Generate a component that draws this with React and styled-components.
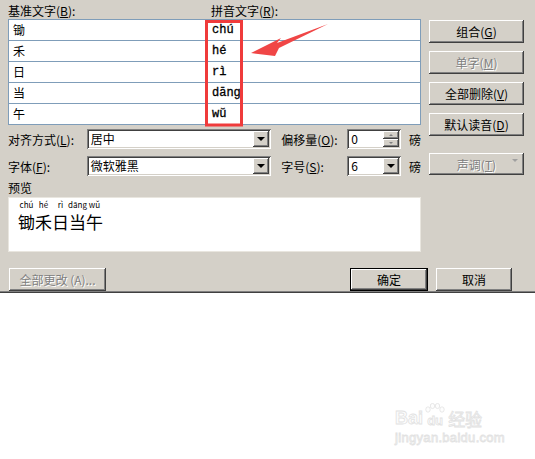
import React from "react";
import styled, { createGlobalStyle } from "styled-components";

// Windows classic 颜色
const FACE = "#d4d0c8";
const GRID = "#7f9db9";
const MARK = "#ef3b3b";

const GlobalStyle = createGlobalStyle`
  * { box-sizing: border-box; }
  html, body {
    margin: 0;
    padding: 0;
    background: #ffffff;
    font-family: "Noto Sans CJK SC", "Liberation Sans", sans-serif;
    font-size: 12px;
    color: #000;
  }
`;

const Page = styled.div`
  width: 535px;
  height: 459px;
  display: flex;
  flex-direction: column;
`;

// 对话框主体
const Dialog = styled.div`
  position: relative;
  width: 535px;
  height: 293px;
  background: ${FACE};
  padding: 3px 11px 0 8px;
  display: grid;
  grid-template-columns: 413px 95px;
  grid-template-rows: auto auto;
  column-gap: 8px;
  box-shadow: inset 0 -1px #404040, inset 0 -2px #808080;
`;

const LeftCol = styled.div`
  display: flex;
  flex-direction: column;
`;

const RightCol = styled.div`
  display: flex;
  flex-direction: column;
  gap: 8px;
  padding-top: 17px;
`;

const LabelRow = styled.div`
  display: flex;
  height: 16px;
  line-height: 16px;
`;

const Label = styled.span`
  display: inline-block;
  width: ${(p) => (p.$w ? `${p.$w}px` : "auto")};
  padding-left: ${(p) => p.$pl || 0}px;
  white-space: nowrap;
  font-size: 12px;
  color: ${(p) => (p.$disabled ? "#808080" : "#000")};
  text-shadow: ${(p) => (p.$disabled ? "1px 1px #fff" : "none")};
  u { text-decoration: underline; }
`;

// 基准/拼音 表格
const Table = styled.div`
  height: 106px;
  background: #fff;
  border: 1px solid ${GRID};
  display: flex;
  flex-direction: column;
`;

const Row = styled.div`
  display: grid;
  grid-template-columns: 198px 1fr;
  height: 21px;
  border-bottom: 1px solid ${GRID};
  &:last-child { border-bottom: none; height: 20px; }
`;

const BaseCell = styled.div`
  padding-left: 4px;
  font-size: 12px;
  line-height: 20px;
`;

const PinyinCell = styled.div`
  padding-left: 5px;
  font-family: "Liberation Mono", "DejaVu Sans Mono", monospace;
  font-weight: 400;
  font-size: 12px;
  line-height: 20px;
  -webkit-text-stroke: 0.3px #000;
`;

const OptRow = styled.div`
  display: flex;
  align-items: center;
  height: 20px;
  margin-top: ${(p) => p.$mt}px;
`;

const Field = styled.div`
  width: ${(p) => p.$w}px;
  height: 20px;
  background: #fff;
  padding: 2px;
  display: flex;
  align-items: center;
  box-shadow: inset 1px 1px #808080, inset -1px -1px #fff,
    inset 2px 2px #404040, inset -2px -2px ${FACE};
`;

const FieldText = styled.span`
  flex: 1;
  padding-left: 2px;
  font-size: 12px;
  line-height: 16px;
`;

const Raised = styled.div`
  width: 16px;
  height: ${(p) => p.$h || 16}px;
  background: ${FACE};
  display: flex;
  align-items: center;
  justify-content: center;
  box-shadow: inset -1px -1px #404040, inset 1px 1px #fff,
    inset -2px -2px #808080, inset 2px 2px ${FACE};
`;

const Tri = styled.span`
  width: 0;
  height: 0;
  border-left: ${(p) => p.$s}px solid transparent;
  border-right: ${(p) => p.$s}px solid transparent;
  border-top: ${(p) => (p.$up ? 0 : `${p.$s}px solid ${p.$c || "#000"}`)};
  border-bottom: ${(p) => (p.$up ? `${p.$s}px solid ${p.$c || "#000"}` : 0)};
`;

const SpinCol = styled.div`
  display: flex;
  flex-direction: column;
`;

const Unit = styled.span`
  margin-left: 8px;
  font-size: 12px;
`;

const PreviewLabel = styled.div`
  margin-top: 4px;
  height: 17px;
  line-height: 16px;
`;

const Preview = styled.div`
  height: 55px;
  background: #fff;
  border: 1px solid #e9e6df;
  padding: 3px 0 0 9px;
  display: flex;
`;

const Glyph = styled.div`
  width: 17px;
  display: flex;
  flex-direction: column;
  align-items: center;
`;

const GlyphPy = styled.span`
  height: 8px;
  font-size: 8px;
  line-height: 8px;
  white-space: nowrap;
`;

const GlyphHz = styled.span`
  margin-top: 3px;
  font-size: 17px;
  line-height: 20px;
`;

// 按钮
const Button = styled.button`
  width: ${(p) => p.$w}px;
  height: ${(p) => p.$h || 23}px;
  margin-top: ${(p) => p.$mt || 0}px;
  margin-left: ${(p) => p.$ml || 0}px;
  padding: 0;
  position: relative;
  background: ${FACE};
  border: ${(p) => (p.$default ? "1px solid #000" : "none")};
  font-family: "Noto Sans CJK SC", "Liberation Sans", sans-serif;
  font-size: 12px;
  color: ${(p) => (p.$disabled ? "#808080" : "#000")};
  text-shadow: ${(p) => (p.$disabled ? "1px 1px #fff" : "none")};
  display: flex;
  align-items: center;
  justify-content: center;
  box-shadow: inset -1px -1px #404040, inset 1px 1px #fff,
    inset -2px -2px #808080, inset 2px 2px ${FACE};
  u { text-decoration: underline; }
`;

const BtnArrow = styled.span`
  position: absolute;
  right: 6px;
  top: 9px;
`;

const BottomRow = styled.div`
  grid-column: 1 / -1;
  display: flex;
  align-items: center;
  margin-top: 8px;
  padding-right: 12px;
  gap: 8px;
`;

const Spacer = styled.div`
  flex: 1;
`;

const Overlay = styled.svg`
  position: absolute;
  left: 0;
  top: 0;
  pointer-events: none;
`;

// 水印
const Below = styled.div`
  flex: 1;
  display: flex;
  justify-content: flex-end;
  align-items: flex-end;
  padding: 0 30px 14px 0;
`;

const Mark = styled.div`
  display: flex;
  flex-direction: column;
  align-items: flex-start;
  color: #fdfdfd;
  -webkit-text-stroke: 0.8px #e2e2e2;
`;

const MarkTop = styled.div`
  display: flex;
  align-items: flex-end;
`;

const MarkLatin = styled.span`
  font-family: "Liberation Sans", sans-serif;
  font-weight: 700;
  font-size: ${(p) => p.$fs}px;
  line-height: 1;
`;

const Paw = styled.div`
  display: flex;
  flex-direction: column;
  align-items: center;
  margin: 0 2px;
`;

const MarkCjk = styled.span`
  font-size: 17px;
  line-height: 1;
  margin-left: 1px;
`;

const MarkUrl = styled.span`
  font-family: "Liberation Sans", sans-serif;
  font-size: 13px;
  margin-top: 3px;
  letter-spacing: 0.3px;
`;

const rows = [
  ["锄", "chú"],
  ["禾", "hé"],
  ["日", "rì"],
  ["当", "dāng"],
  ["午", "wǔ"],
];

const Combo = ({ w, value }) => (
  <Field $w={w}>
    <FieldText>{value}</FieldText>
    <Raised>
      <Tri $s={4} />
    </Raised>
  </Field>
);

export default function App() {
  return (
    <>
      <GlobalStyle />
      <Page>
        <Dialog>
          <LeftCol>
            <LabelRow>
              <Label $w={203}>
                基准文字(<u>B</u>):
              </Label>
              <Label>
                拼音文字(<u>R</u>):
              </Label>
            </LabelRow>
            <Table>
              {rows.map(([hz, py]) => (
                <Row key={hz}>
                  <BaseCell>{hz}</BaseCell>
                  <PinyinCell>{py}</PinyinCell>
                </Row>
              ))}
            </Table>

            <OptRow $mt={4}>
              <Label $w={79}>
                对齐方式(<u>L</u>):
              </Label>
              <Combo w={185} value="居中" />
              <Label $w={76} $pl={10}>
                偏移量(<u>O</u>):
              </Label>
              <Field $w={54}>
                <FieldText>0</FieldText>
                <SpinCol>
                  <Raised $h={8}>
                    <Tri $s={2} $up $c="#808080" />
                  </Raised>
                  <Raised $h={8}>
                    <Tri $s={2} $c="#808080" />
                  </Raised>
                </SpinCol>
              </Field>
              <Unit>磅</Unit>
            </OptRow>

            <OptRow $mt={7}>
              <Label $w={79}>
                字体(<u>F</u>):
              </Label>
              <Combo w={185} value="微软雅黑" />
              <Label $w={76} $pl={10}>
                字号(<u>S</u>):
              </Label>
              <Combo w={54} value="6" />
              <Unit>磅</Unit>
            </OptRow>

            <PreviewLabel>预览</PreviewLabel>
            <Preview>
              {rows.map(([hz, py]) => (
                <Glyph key={hz}>
                  <GlyphPy>{py}</GlyphPy>
                  <GlyphHz>{hz}</GlyphHz>
                </Glyph>
              ))}
            </Preview>
          </LeftCol>

          <RightCol>
            <Button $w={95}>
              组合(<u>G</u>)
            </Button>
            <Button $w={95} $disabled disabled>
              单字(<u>M</u>)
            </Button>
            <Button $w={95}>
              全部删除(<u>V</u>)
            </Button>
            <Button $w={95}>
              默认读音(<u>D</u>)
            </Button>
            <Button $w={95} $h={22} $mt={9} $disabled disabled>
              声调(<u>T</u>)
              <BtnArrow>
                <Tri $s={3} $c="#a0a0a0" />
              </BtnArrow>
            </Button>
          </RightCol>

          <BottomRow>
            <Button $w={97} $ml={1} $disabled disabled>
              全部更改 (A)...
            </Button>
            <Spacer />
            <Button $w={78} $default>
              确定
            </Button>
            <Button $w={76}>取消</Button>
          </BottomRow>

          <Overlay width="535" height="293" viewBox="0 0 535 293">
            <rect
              x="206.5"
              y="21.5"
              width="35"
              height="103.5"
              fill="none"
              stroke={MARK}
              strokeWidth="3"
            />
            <polygon
              points="251,53 281,38 277,43 328,24 279,48 275,56"
              fill="#f04646"
            />
          </Overlay>
        </Dialog>

        <Below>
          <Mark>
            <MarkTop>
              <MarkLatin $fs={18}>Bai</MarkLatin>
              <Paw>
                <svg width="20" height="11" viewBox="0 0 20 11">
                  <g fill="#fdfdfd" stroke="#e2e2e2" strokeWidth="0.8">
                    <ellipse cx="3" cy="6.5" rx="2.2" ry="2.7" />
                    <ellipse cx="7.5" cy="3" rx="2.2" ry="2.6" />
                    <ellipse cx="12.5" cy="3" rx="2.2" ry="2.6" />
                    <ellipse cx="17" cy="6.5" rx="2.2" ry="2.7" />
                  </g>
                </svg>
                <MarkLatin $fs={13}>du</MarkLatin>
              </Paw>
              <MarkCjk>经验</MarkCjk>
            </MarkTop>
            <MarkUrl>jingyan.baidu.com</MarkUrl>
          </Mark>
        </Below>
      </Page>
    </>
  );
}
